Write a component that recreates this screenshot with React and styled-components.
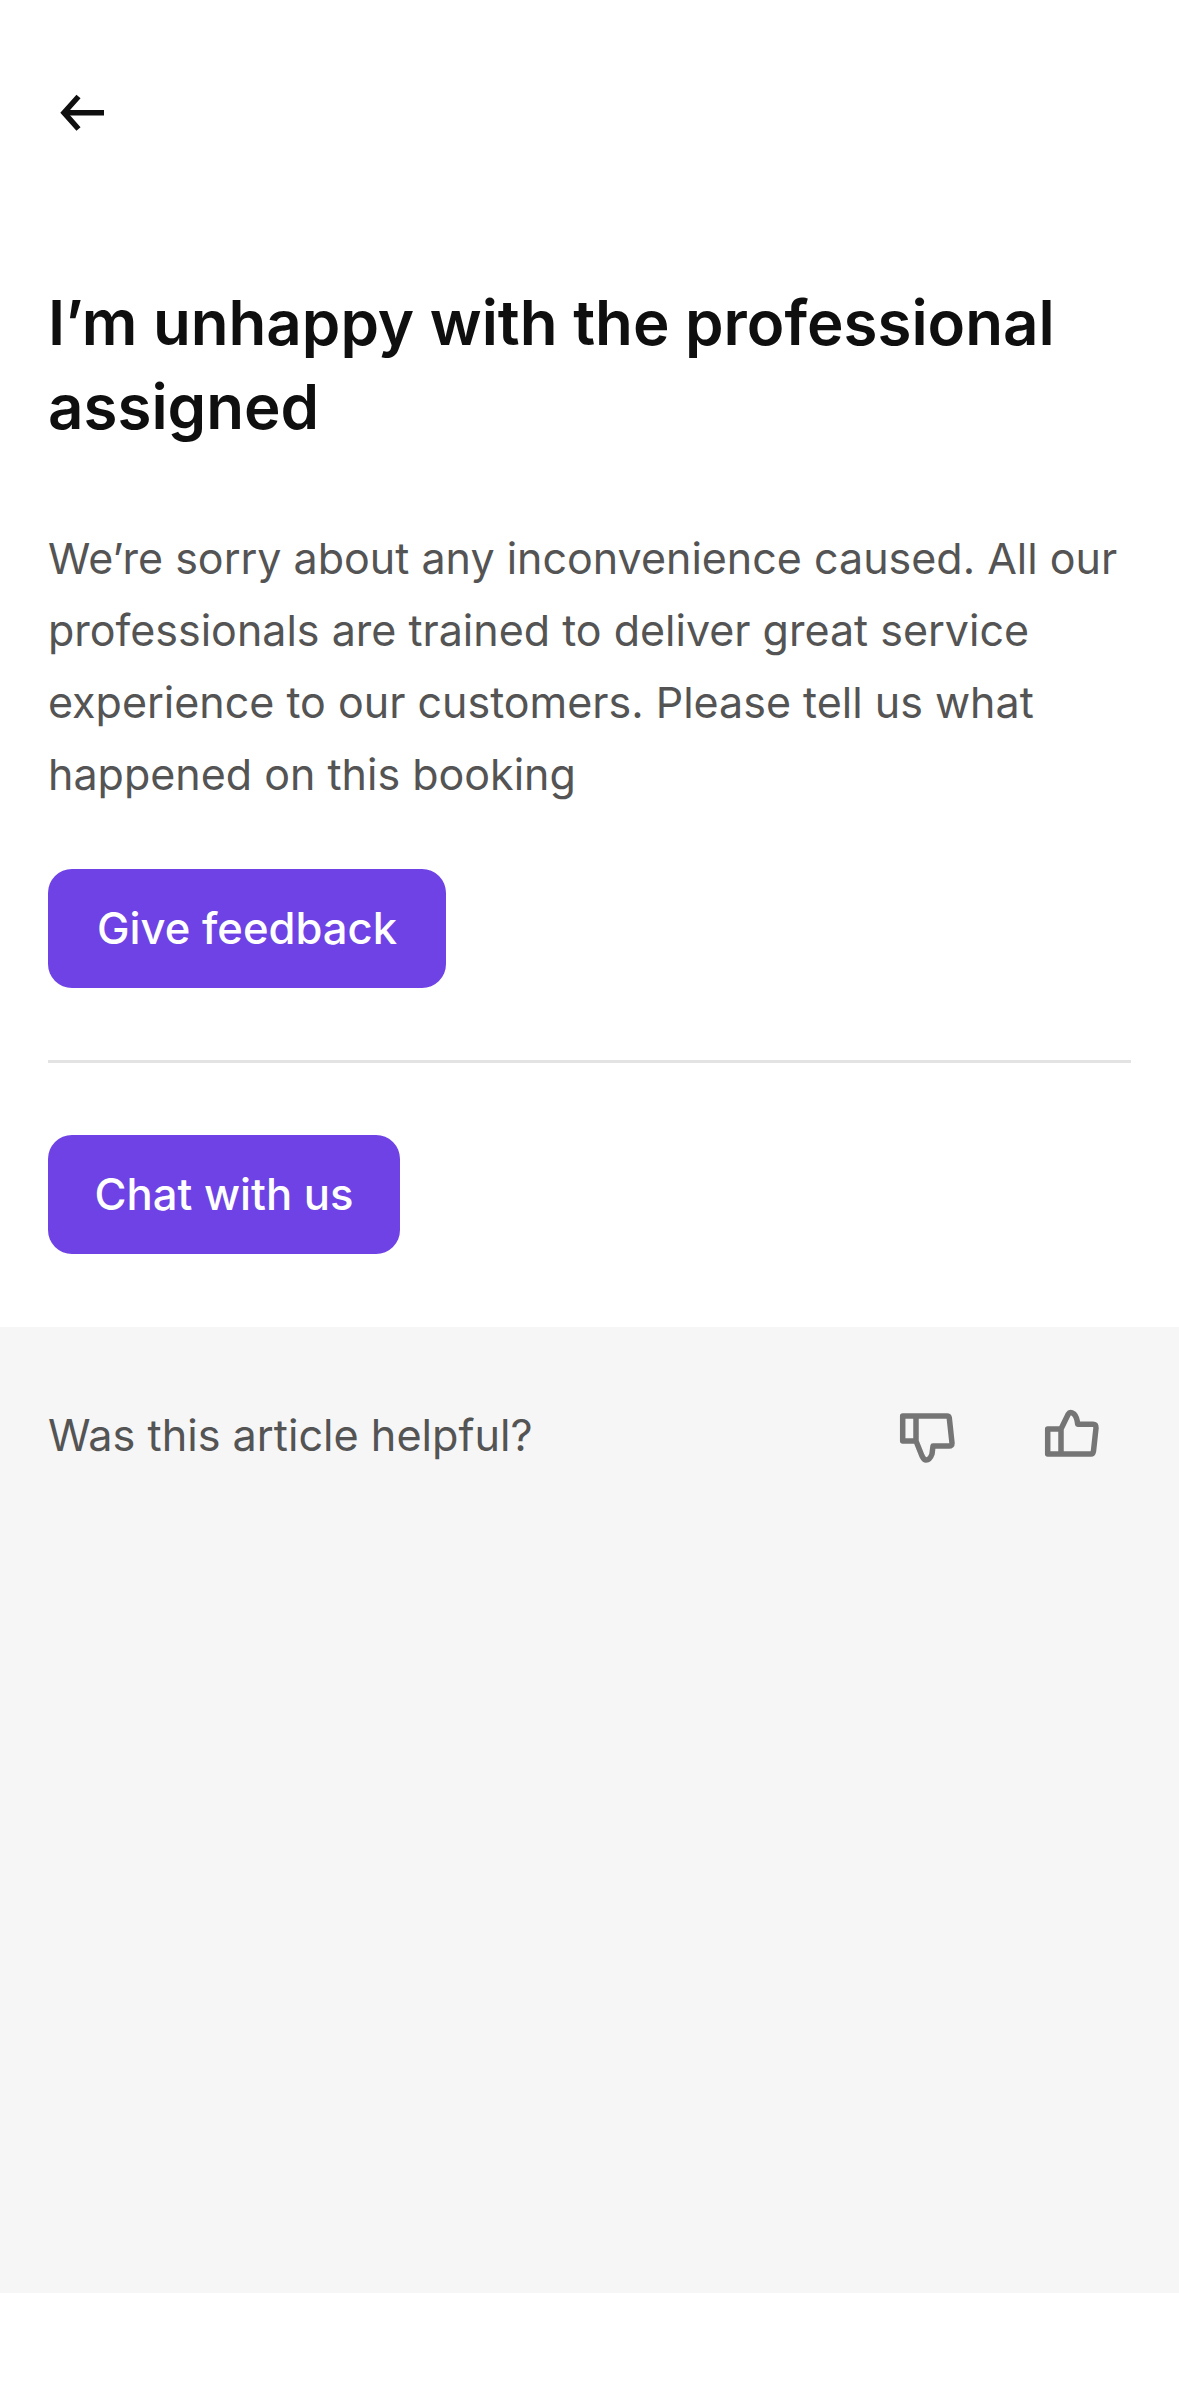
import React from "react";
import styled, { createGlobalStyle } from "styled-components";

const Global = createGlobalStyle`
  html, body { margin: 0; padding: 0; background: #fff; }
  * { box-sizing: border-box; }
`;
const Page = styled.div`
  width: 1179px;
  height: 2396px;
  font-family: Inter, "Liberation Sans", sans-serif;
  background: #fff;
  overflow: hidden;
`;
const Content = styled.main`
  padding: 0 48px 73px;
`;
const BackButton = styled.button`
  display: block;
  width: 60px;
  height: 60px;
  margin: 83px 0 0 3px;
  padding: 0;
  border: 0;
  background: none;
`;
const Title = styled.h1`
  margin: 138px 0 0;
  font-size: 61.8px;
  line-height: 84px;
  font-weight: 600;
  letter-spacing: 0;
  color: #0f0f0f;
`;
const Body = styled.p`
  margin: 73px 0 0;
  font-size: 43px;
  line-height: 72px;
  font-weight: 400;
  color: #545454;
`;
const Action = styled.button`
  display: block;
  width: ${(p) => p.$width}px;
  height: 119px;
  padding: 0;
  border: 0;
  border-radius: 24px;
  background: #6e42e5;
  color: #fff;
  font-family: inherit;
  font-size: 43.6px;
  font-weight: 500;
  text-align: center;
`;
const FeedbackSection = styled.div`
  margin-top: 59px;
`;
const Divider = styled.hr`
  height: 3px;
  margin: 72px 0;
  border: 0;
  background: #e3e3e3;
`;
const HelpBand = styled.section`
  height: 966px;
  padding: 72px 48px 0;
  background: #f6f6f6;
`;
const HelpRow = styled.div`
  display: flex;
  align-items: flex-start;
  height: 72px;
`;
const HelpText = styled.span`
  flex: 1;
  font-size: 43.2px;
  line-height: 72px;
  color: #545454;
`;
const VoteIcons = styled.div`
  display: flex;
  align-items: flex-start;
  gap: 84px;
  margin-right: 30px;
`;
const Vote = styled.svg`
  display: block;
  margin-top: ${(p) => p.$top}px;
  fill: none;
  stroke: #757575;
  stroke-width: 5.5;
  stroke-linejoin: round;
  stroke-linecap: round;
`;

export default function App() {
  return (
    <Page>
      <Global />
      <Content>
        <BackButton aria-label="Back">
          <svg width="60" height="60" viewBox="0 0 60 60" fill="none" stroke="#0f0f0f" strokeWidth="5.5">
            <path d="M12 29.7H53" />
            <path d="M27.5 13.5L13 29.7L27.5 46" />
          </svg>
        </BackButton>
        <Title>I’m unhappy with the professional assigned</Title>
        <Body>
          We’re sorry about any inconvenience caused. All our professionals are trained to deliver great service
          experience to our customers. Please tell us what happened on this booking
        </Body>
        <FeedbackSection>
          <Action $width={398}>Give feedback</Action>
        </FeedbackSection>
        <Divider />
        <Action $width={352}>Chat with us</Action>
      </Content>
      <HelpBand>
        <HelpRow>
          <HelpText>Was this article helpful?</HelpText>
          <VoteIcons>
            <Vote $top={12} width="60" height="55" viewBox="0 0 60 55">
              <path d="M5.7 5H50Q52 5 52.3 7L55 32Q55 35 52 35H36L35 43Q33 49 29 49Q27 49 25 45L19 30H5.7ZM19 5V30" />
            </Vote>
            <Vote $top={7} width="60" height="55" viewBox="0 0 60 55">
              <path d="M6.7 23H20L27.3 8Q29 5 33 8Q36 11 36.7 18.3H52Q55 18.3 55 22L52.5 45Q52 48 50 48H6.7ZM20 23V48" />
            </Vote>
          </VoteIcons>
        </HelpRow>
      </HelpBand>
    </Page>
  );
}
